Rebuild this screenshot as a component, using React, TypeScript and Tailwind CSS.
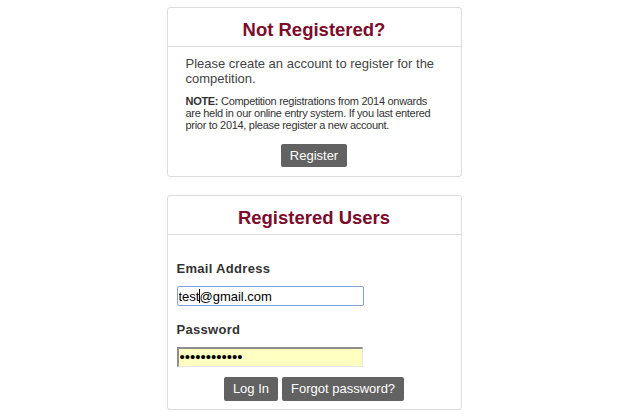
export default function App() {
  return (
    <div className="min-h-screen w-full bg-white pt-[7px] font-['Liberation_Sans',Arial,sans-serif] text-[#333]">
      <div className="flex flex-col items-center pr-[2px]">
        {/* Not registered card */}
        <div className="w-[295px] rounded-[3px] border border-[#dcdcdc] bg-white">
          <div className="flex h-[39px] items-center justify-center border-b border-[#dcdcdc] pt-[5px]">
            <h2 className="text-[18.5px] font-bold text-[#7b0c2c]">Not Registered?</h2>
          </div>
          <div className="px-[18px] pb-[9px] pt-[9px]">
            <p className="text-[13px] leading-[15px] text-[#444]">
              Please create an account to register for the competition.
            </p>
            <p className="mt-[9px] text-[11px] leading-[12px] tracking-[-0.3px] text-[#333]">
              <span className="font-bold">NOTE:</span> Competition registrations from 2014 onwards are held in our
              online entry system. If you last entered prior to 2014, please register a new account.
            </p>
            <div className="mt-[13px] flex justify-center">
              <button className="h-[23px] rounded-[2px] bg-[#626262] px-[9px] text-[13px] text-white">Register</button>
            </div>
          </div>
        </div>

        {/* Registered users card */}
        <div className="mt-[18px] w-[295px] rounded-[3px] border border-[#dcdcdc] bg-white">
          <div className="flex h-[39px] items-center justify-center border-b border-[#dcdcdc] pt-[5px]">
            <h2 className="text-[18.5px] font-bold text-[#7b0c2c]">Registered Users</h2>
          </div>
          <div className="px-[9px] pb-[8px] pt-[26px]">
            <label className="block text-[13px] font-bold leading-[15px] tracking-[0.3px] text-[#333]">
              Email Address
            </label>
            <div className="relative mt-[10px] w-[187px]">
              <input
                readOnly
                value="test@gmail.com"
                className="block h-[20px] w-full rounded-[2px] border border-[#7ea3da] bg-white px-[1px] text-[13px] text-black outline-none"
              />
              <span className="absolute left-[22px] top-[3px] h-[14px] w-px bg-black" />
            </div>
            <label className="mt-[16px] block text-[13px] font-bold leading-[15px] tracking-[0.3px] text-[#333]">
              Password
            </label>
            <input
              readOnly
              type="password"
              value="123456789012"
              className="mt-[10px] block h-[20px] w-[186px] border-b border-l-2 border-r border-t-2 border-b-[#e4e4e4] border-l-[#8f8f8f] border-r-[#e4e4e4] border-t-[#8f8f8f] bg-[#ffffc2] px-[1px] text-[15px] text-black outline-none"
            />
            <div className="mt-[10px] flex justify-center gap-[4px]">
              <button className="h-[24px] rounded-[2px] bg-[#626262] px-[9px] text-[13px] text-white">Log In</button>
              <button className="h-[24px] rounded-[2px] bg-[#626262] px-[9px] text-[13px] text-white">
                Forgot password?
              </button>
            </div>
          </div>
        </div>
      </div>
    </div>
  );
}
